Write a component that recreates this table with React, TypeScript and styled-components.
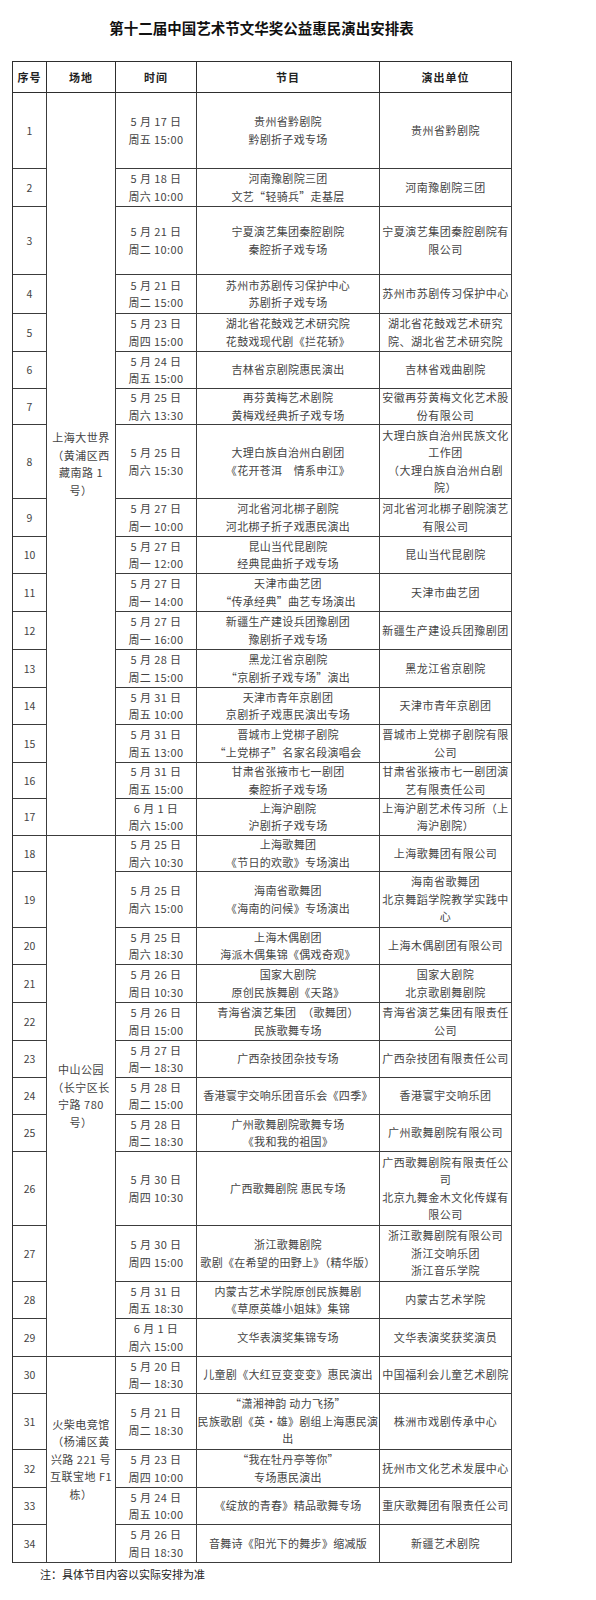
import React from "react";
import styled, { createGlobalStyle } from "styled-components";

interface Show {
	no: number;
	h: number;
	time: string[];
	program: string[];
	unit: string[];
}

interface Venue {
	name: string[];
	shows: Show[];
}

const venues: Venue[] = [
	{
		name: ["上海大世界", "（黄浦区西", "藏南路 1", "号）"],
		shows: [
			{ no: 1, h: 76, time: ["5 月 17 日", "周五 15:00"], program: ["贵州省黔剧院", "黔剧折子戏专场"], unit: ["贵州省黔剧院"] },
			{ no: 2, h: 38, time: ["5 月 18 日", "周六 10:00"], program: ["河南豫剧院三团", "文艺“轻骑兵”走基层"], unit: ["河南豫剧院三团"] },
			{ no: 3, h: 68, time: ["5 月 21 日", "周二 10:00"], program: ["宁夏演艺集团秦腔剧院", "秦腔折子戏专场"], unit: ["宁夏演艺集团秦腔剧院有", "限公司"] },
			{ no: 4, h: 39, time: ["5 月 21 日", "周二 15:00"], program: ["苏州市苏剧传习保护中心", "苏剧折子戏专场"], unit: ["苏州市苏剧传习保护中心"] },
			{ no: 5, h: 38, time: ["5 月 23 日", "周四 15:00"], program: ["湖北省花鼓戏艺术研究院", "花鼓戏现代剧《拦花轿》"], unit: ["湖北省花鼓戏艺术研究", "院、湖北省艺术研究院"] },
			{ no: 6, h: 37, time: ["5 月 24 日", "周五 15:00"], program: ["吉林省京剧院惠民演出"], unit: ["吉林省戏曲剧院"] },
			{ no: 7, h: 36, time: ["5 月 25 日", "周六 13:30"], program: ["再芬黄梅艺术剧院", "黄梅戏经典折子戏专场"], unit: ["安徽再芬黄梅文化艺术股", "份有限公司"] },
			{ no: 8, h: 74, time: ["5 月 25 日", "周六 15:30"], program: ["大理白族自治州白剧团", "《花开苍洱　情系申江》"], unit: ["大理白族自治州民族文化", "工作团", "（大理白族自治州白剧", "院）"] },
			{ no: 9, h: 38, time: ["5 月 27 日", "周一 10:00"], program: ["河北省河北梆子剧院", "河北梆子折子戏惠民演出"], unit: ["河北省河北梆子剧院演艺", "有限公司"] },
			{ no: 10, h: 37, time: ["5 月 27 日", "周一 12:00"], program: ["昆山当代昆剧院", "经典昆曲折子戏专场"], unit: ["昆山当代昆剧院"] },
			{ no: 11, h: 38, time: ["5 月 27 日", "周一 14:00"], program: ["天津市曲艺团", "“传承经典”曲艺专场演出"], unit: ["天津市曲艺团"] },
			{ no: 12, h: 38, time: ["5 月 27 日", "周一 16:00"], program: ["新疆生产建设兵团豫剧团", "豫剧折子戏专场"], unit: ["新疆生产建设兵团豫剧团"] },
			{ no: 13, h: 38, time: ["5 月 28 日", "周二 15:00"], program: ["黑龙江省京剧院", "“京剧折子戏专场”演出"], unit: ["黑龙江省京剧院"] },
			{ no: 14, h: 37, time: ["5 月 31 日", "周五 10:00"], program: ["天津市青年京剧团", "京剧折子戏惠民演出专场"], unit: ["天津市青年京剧团"] },
			{ no: 15, h: 38, time: ["5 月 31 日", "周五 13:00"], program: ["晋城市上党梆子剧院", "“上党梆子”名家名段演唱会"], unit: ["晋城市上党梆子剧院有限", "公司"] },
			{ no: 16, h: 36, time: ["5 月 31 日", "周五 15:00"], program: ["甘肃省张掖市七一剧团", "秦腔折子戏专场"], unit: ["甘肃省张掖市七一剧团演", "艺有限责任公司"] },
			{ no: 17, h: 37, time: ["6 月 1 日", "周六 15:00"], program: ["上海沪剧院", "沪剧折子戏专场"], unit: ["上海沪剧艺术传习所（上", "海沪剧院）"] },
		],
	},
	{
		name: ["中山公园", "（长宁区长", "宁路 780", "号）"],
		shows: [
			{ no: 18, h: 36, time: ["5 月 25 日", "周六 10:30"], program: ["上海歌舞团", "《节日的欢歌》专场演出"], unit: ["上海歌舞团有限公司"] },
			{ no: 19, h: 56, time: ["5 月 25 日", "周六 15:00"], program: ["海南省歌舞团", "《海南的问候》专场演出"], unit: ["海南省歌舞团", "北京舞蹈学院教学实践中", "心"] },
			{ no: 20, h: 37, time: ["5 月 25 日", "周六 18:30"], program: ["上海木偶剧团", "海派木偶集锦《偶戏奇观》"], unit: ["上海木偶剧团有限公司"] },
			{ no: 21, h: 38, time: ["5 月 26 日", "周日 10:30"], program: ["国家大剧院", "原创民族舞剧《天路》"], unit: ["国家大剧院", "北京歌剧舞剧院"] },
			{ no: 22, h: 38, time: ["5 月 26 日", "周日 15:00"], program: ["青海省演艺集团　（歌舞团）", "民族歌舞专场"], unit: ["青海省演艺集团有限责任", "公司"] },
			{ no: 23, h: 37, time: ["5 月 27 日", "周一 18:30"], program: ["广西杂技团杂技专场"], unit: ["广西杂技团有限责任公司"] },
			{ no: 24, h: 37, time: ["5 月 28 日", "周二 15:00"], program: ["香港寰宇交响乐团音乐会《四季》"], unit: ["香港寰宇交响乐团"] },
			{ no: 25, h: 37, time: ["5 月 28 日", "周二 18:30"], program: ["广州歌舞剧院歌舞专场", "《我和我的祖国》"], unit: ["广州歌舞剧院有限公司"] },
			{ no: 26, h: 74, time: ["5 月 30 日", "周四 10:30"], program: ["广西歌舞剧院 惠民专场"], unit: ["广西歌舞剧院有限责任公", "司", "北京九舞金木文化传媒有", "限公司"] },
			{ no: 27, h: 56, time: ["5 月 30 日", "周四 15:00"], program: ["浙江歌舞剧院", "歌剧《在希望的田野上》（精华版）"], unit: ["浙江歌舞剧院有限公司", "浙江交响乐团", "浙江音乐学院"] },
			{ no: 28, h: 37, time: ["5 月 31 日", "周五 18:30"], program: ["内蒙古艺术学院原创民族舞剧", "《草原英雄小姐妹》集锦"], unit: ["内蒙古艺术学院"] },
			{ no: 29, h: 38, time: ["6 月 1 日", "周六 15:00"], program: ["文华表演奖集锦专场"], unit: ["文华表演奖获奖演员"] },
		],
	},
	{
		name: ["火柴电竞馆", "（杨浦区黄", "兴路 221 号", "互联宝地 F1", "栋）"],
		shows: [
			{ no: 30, h: 37, time: ["5 月 20 日", "周一 18:30"], program: ["儿童剧《大红豆变变变》惠民演出"], unit: ["中国福利会儿童艺术剧院"] },
			{ no: 31, h: 56, time: ["5 月 21 日", "周二 18:30"], program: ["“潇湘神韵 动力飞扬”", "民族歌剧《英·雄》剧组上海惠民演", "出"], unit: ["株洲市戏剧传承中心"] },
			{ no: 32, h: 38, time: ["5 月 23 日", "周四 10:00"], program: ["“我在牡丹亭等你”", "专场惠民演出"], unit: ["抚州市文化艺术发展中心"] },
			{ no: 33, h: 37, time: ["5 月 24 日", "周五 10:00"], program: ["《绽放的青春》精品歌舞专场"], unit: ["重庆歌舞团有限责任公司"] },
			{ no: 34, h: 38, time: ["5 月 26 日", "周日 18:30"], program: ["音舞诗《阳光下的舞步》缩减版"], unit: ["新疆艺术剧院"] },
		],
	},
];

const columns = [
	{ label: "序号", width: 34 },
	{ label: "场地", width: 69 },
	{ label: "时间", width: 81 },
	{ label: "节目", width: 183 },
	{ label: "演出单位", width: 132 },
];

const App: React.FC = () => {
	return (
		<Page>
			<GlobalStyle />
			<Title>第十二届中国艺术节文华奖公益惠民演出安排表</Title>
			<Table>
				<colgroup>
					{columns.map((c) => (
						<col key={c.label} style={{ width: c.width }} />
					))}
				</colgroup>
				<thead>
					<Row $h={31}>
						{columns.map((c) => (
							<HeadCell key={c.label}>{c.label}</HeadCell>
						))}
					</Row>
				</thead>
				<tbody>
					{venues.map((venue) =>
						venue.shows.map((show, i) => (
							<Row key={show.no} $h={show.h}>
								<NoCell>{show.no}</NoCell>
								{i === 0 && (
									<Cell rowSpan={venue.shows.length}>
										<Lines lines={venue.name} />
									</Cell>
								)}
								<TimeCell>
									<Lines lines={show.time} />
								</TimeCell>
								<ProgramCell>
									<Lines lines={show.program} />
								</ProgramCell>
								<Cell>
									<Lines lines={show.unit} />
								</Cell>
							</Row>
						))
					)}
				</tbody>
			</Table>
			<Note>注：具体节目内容以实际安排为准</Note>
		</Page>
	);
};

const Lines: React.FC<{ lines: string[] }> = ({ lines }) => (
	<>
		{lines.map((line, i) => (
			<Line key={i}>{line}</Line>
		))}
	</>
);

const GlobalStyle = createGlobalStyle`
  html, body {
    margin: 0;
    padding: 0;
    background: #fff;
  }
  body {
    font-family: "Noto Sans CJK SC", "Noto Sans", sans-serif;
    color: #444;
  }
`;

const Page = styled.div`
  width: 499px;
  padding: 0 0 20px 12px;
`;

const Title = styled.h1`
  margin: 0 0 23px;
  padding-top: 18px;
  height: 20px;
  font-size: 14.5px;
  line-height: 20px;
  font-weight: 700;
  color: #111;
  text-align: center;
`;

const Table = styled.table`
  width: 499px;
  table-layout: fixed;
  border-collapse: separate;
  border-spacing: 0;
  border-top: 1px solid #2e2e2e;
  border-left: 1px solid #2e2e2e;
`;

const Row = styled.tr<{ $h: number }>`
  height: ${({ $h }) => $h}px;
`;

const Cell = styled.td`
  box-sizing: border-box;
  padding: 0;
  border-right: 1px solid #3c3c3c;
  border-bottom: 1px solid #3c3c3c;
  text-align: center;
  vertical-align: middle;
  font-size: 11px;
  line-height: 17.5px;
  letter-spacing: 0.5px;
  white-space: nowrap;
  overflow: hidden;
`;

const HeadCell = styled.th`
  box-sizing: border-box;
  padding: 0;
  border-right: 1px solid #2e2e2e;
  border-bottom: 1px solid #2e2e2e;
  font-size: 11px;
  font-weight: 700;
  letter-spacing: 1px;
  color: #222;
  text-align: center;
  vertical-align: middle;
`;

const NoCell = styled(Cell)`
  font-size: 10.5px;
  letter-spacing: 0;
`;

const TimeCell = styled(Cell)`
  letter-spacing: 0.4px;
`;

const ProgramCell = styled(Cell)`
  letter-spacing: 0.3px;
`;

const Line = styled.span`
  display: block;
`;

const Note = styled.p`
  margin: 3px 0 0 28px;
  font-size: 11px;
  line-height: 16px;
  color: #222;
`;

export default App;
